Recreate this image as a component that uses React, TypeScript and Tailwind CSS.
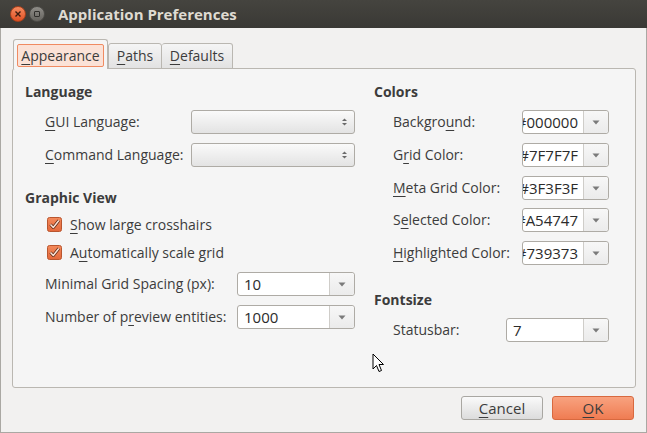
import React from "react";

const font = { fontFamily: '"Open Sans", "Noto Sans", sans-serif' };

function U({ children }: { children: React.ReactNode }) {
  return <span className="underline underline-offset-[3px] decoration-1">{children}</span>;
}

function PlainCombo() {
  return (
    <div className="relative h-[24px] w-[164px] rounded-[3px] border border-[#aeaba5] bg-gradient-to-b from-[#fafafa] to-[#e3e3e3]">
      <svg className="absolute right-[6px] top-[6px]" width="7" height="10" viewBox="0 0 7 10">
        <path d="M1 4 L3.5 1.5 L6 4 Z" fill="#6a6a6a" />
        <path d="M1 6 L3.5 8.5 L6 6 Z" fill="#6a6a6a" />
      </svg>
    </div>
  );
}

function EditCombo({ value, w }: { value: string; w: string }) {
  return (
    <div className={`flex h-[24px] ${w} rounded-[3px] border border-[#aeaba5] bg-white`}>
      <div className="flex min-w-0 flex-1 items-center overflow-hidden whitespace-nowrap pl-[6px] text-[15px] text-[#2b2b2b]">
        {value}
      </div>
      <div className="flex w-[25px] items-center justify-center rounded-r-[3px] border-l border-[#cfcdc9] bg-gradient-to-b from-[#f7f7f7] to-[#ebebeb]">
        <svg width="8" height="5" viewBox="0 0 8 5">
          <path d="M0.5 0.5 L7.5 0.5 L4 4.5 Z" fill="#7a7a7a" />
        </svg>
      </div>
    </div>
  );
}

function ColorCombo({ value }: { value: string }) {
  return (
    <div className="flex h-[24px] w-[87px] rounded-[3px] border border-[#aeaba5] bg-white">
      <div className="flex min-w-0 flex-1 items-center justify-end overflow-hidden whitespace-nowrap pr-[5px] text-[15px] text-[#2b2b2b]">
        {value}
      </div>
      <div className="flex w-[25px] shrink-0 items-center justify-center rounded-r-[3px] border-l border-[#cfcdc9] bg-gradient-to-b from-[#f7f7f7] to-[#ebebeb]">
        <svg width="8" height="5" viewBox="0 0 8 5">
          <path d="M0.5 0.5 L7.5 0.5 L4 4.5 Z" fill="#7a7a7a" />
        </svg>
      </div>
    </div>
  );
}

function Check() {
  return (
    <svg width="15" height="15" viewBox="0 0 15 15" className="shrink-0">
      <defs>
        <linearGradient id="cb" x1="0" y1="0" x2="0" y2="1">
          <stop offset="0" stopColor="#f38a5c" />
          <stop offset="1" stopColor="#e3673a" />
        </linearGradient>
      </defs>
      <rect x="0.5" y="0.5" width="14" height="14" rx="2" fill="url(#cb)" stroke="#b9562f" />
      <path d="M3.5 7.5 L6.3 10.5 L11.8 3.5" fill="none" stroke="#5a2a16" strokeWidth="3" strokeLinejoin="round" />
      <path d="M3.5 7.5 L6.3 10.5 L11.8 3.5" fill="none" stroke="#fde3d7" strokeWidth="1.5" strokeLinejoin="round" />
    </svg>
  );
}

function Row({ label, children, indent }: { label: React.ReactNode; children: React.ReactNode; indent: string }) {
  return (
    <div className={`flex h-[24px] items-center ${indent}`}>
      <div className="flex-1 leading-[20px]">{label}</div>
      {children}
    </div>
  );
}

export default function App() {
  return (
    <div style={font} className="relative flex h-[433px] w-[647px] flex-col overflow-hidden text-[14px] text-[#3c3c3c]">
      {/* title bar */}
      <div className="flex h-[28px] shrink-0 items-center bg-gradient-to-b from-[#45443f] to-[#3a3935] pl-[10px]">
        <div className="flex h-[16px] w-[16px] items-center justify-center rounded-full border border-[#a8401c] bg-gradient-to-b from-[#f58a5e] to-[#df4f22]">
          <svg width="6" height="6" viewBox="0 0 6 6">
            <path d="M0.5 0.5 L5.5 5.5 M5.5 0.5 L0.5 5.5" stroke="#3a1c10" strokeWidth="1.4" />
          </svg>
        </div>
        <div className="ml-[3px] flex h-[16px] w-[16px] items-center justify-center rounded-full border border-[#4d4c48] bg-gradient-to-b from-[#8f8d88] to-[#66645f]">
          <div className="h-[6px] w-[6px] rounded-[1px] border border-[#2f2e2b]" />
        </div>
        <div className="ml-[13px] text-[15px] font-bold text-[#dfdbd2]">Application Preferences</div>
      </div>

      {/* body */}
      <div className="flex flex-1 flex-col border-x border-b border-[#aaa8a3] bg-[#f2f1f0] pl-[11px] pr-[10px] pt-[11px]">
        {/* tabs */}
        <div className="relative z-10 -mb-px ml-[1px] flex items-end">
          <div className="flex h-[30px] w-[95px] items-start rounded-t-[3px] border border-b-0 border-[#bab7b1] bg-[#f5f5f5] px-[3px] pt-[4px]">
            <div className="flex h-[23px] w-full items-center justify-center rounded-[2px] border border-[#f08b62] bg-[#fbe2d7] pb-[1px]">
              <span>
                <U>A</U>ppearance
              </span>
            </div>
          </div>
          <div className="flex h-[26px] w-[54px] items-center justify-center rounded-t-[3px] border border-[#bab7b1] bg-gradient-to-b from-[#f5f5f5] to-[#e2e2e2] pb-[2px]">
            <span>
              <U>P</U>aths
            </span>
          </div>
          <div className="flex h-[26px] w-[71px] items-center justify-center rounded-t-[3px] border border-l-0 border-[#bab7b1] bg-gradient-to-b from-[#f5f5f5] to-[#e2e2e2] pb-[2px]">
            <span>
              <U>D</U>efaults
            </span>
          </div>
        </div>

        {/* panel */}
        <div className="flex h-[320px] rounded-[3px] border border-[#bab7b1] bg-[#f5f5f5] pl-[12px] pt-[13px]">
          {/* left column */}
          <div className="flex w-[330px] flex-col">
            <div className="h-[20px] font-bold leading-[20px]">Language</div>
            <div className="mt-[8px]">
              <Row indent="pl-[20px]" label={<><U>G</U>UI Language:</>}>
                <PlainCombo />
              </Row>
            </div>
            <div className="mt-[9px]">
              <Row indent="pl-[20px]" label={<><U>C</U>ommand Language:</>}>
                <PlainCombo />
              </Row>
            </div>

            <div className="mt-[21px] h-[20px] font-bold leading-[20px]">Graphic View</div>
            <div className="mt-[4px] flex h-[24px] items-center gap-[8px] pl-[22px]">
              <Check />
              <span>
                <U>S</U>how large crosshairs
              </span>
            </div>
            <div className="mt-[4px] flex h-[24px] items-center gap-[8px] pl-[22px]">
              <Check />
              <span>
                A<U>u</U>tomatically scale grid
              </span>
            </div>
            <div className="mt-[8px]">
              <Row indent="pl-[20px]" label="Minimal Grid Spacing (px):">
                <EditCombo value="10" w="w-[118px]" />
              </Row>
            </div>
            <div className="mt-[9px]">
              <Row indent="pl-[20px]" label={<>Number of p<U>r</U>eview entities:</>}>
                <EditCombo value="1000" w="w-[118px]" />
              </Row>
            </div>
          </div>

          {/* right column */}
          <div className="ml-[19px] flex w-[235px] flex-col">
            <div className="h-[20px] font-bold leading-[20px]">Colors</div>
            <div className="mt-[8px]">
              <Row indent="pl-[19px]" label={<>Backgro<U>u</U>nd:</>}>
                <ColorCombo value="#000000" />
              </Row>
            </div>
            <div className="mt-[9px]">
              <Row indent="pl-[19px]" label={<>G<U>r</U>id Color:</>}>
                <ColorCombo value="#7F7F7F" />
              </Row>
            </div>
            <div className="mt-[9px]">
              <Row indent="pl-[19px]" label={<><U>M</U>eta Grid Color:</>}>
                <ColorCombo value="#3F3F3F" />
              </Row>
            </div>
            <div className="mt-[8px]">
              <Row indent="pl-[19px]" label={<>S<U>e</U>lected Color:</>}>
                <ColorCombo value="#A54747" />
              </Row>
            </div>
            <div className="mt-[9px]">
              <Row indent="pl-[19px]" label={<><U>H</U>ighlighted Color:</>}>
                <ColorCombo value="#739373" />
              </Row>
            </div>

            <div className="mt-[25px] h-[20px] font-bold leading-[20px]">Fontsize</div>
            <div className="mt-[8px]">
              <Row indent="pl-[19px]" label="Statusbar:">
                <EditCombo value="7" w="w-[103px]" />
              </Row>
            </div>
          </div>
        </div>

        {/* buttons */}
        <div className="flex justify-end gap-[9px] pr-[2px] pt-[8px]">
          <div className="flex h-[24px] w-[82px] items-center justify-center rounded-[3px] border border-[#a9a7a2] bg-gradient-to-b from-[#fafafa] to-[#dcdcdc] text-[15px]">
            <span>
              <U>C</U>ancel
            </span>
          </div>
          <div className="flex h-[24px] w-[82px] items-center justify-center rounded-[3px] border border-[#d8693f] bg-gradient-to-b from-[#f8a27f] to-[#ef7c52] text-[15px]">
            <span>
              <U>O</U>K
            </span>
          </div>
        </div>
      </div>

      {/* mouse pointer */}
      <svg className="absolute left-[372px] top-[353px]" width="13" height="21" viewBox="0 0 13 21">
        <path d="M1 1 L1 16 L4.5 12.5 L7 18.5 L9.5 17.5 L7 11.5 L11.5 11.5 Z" fill="#ffffff" stroke="#000000" strokeWidth="1" strokeLinejoin="round" />
      </svg>
    </div>
  );
}
